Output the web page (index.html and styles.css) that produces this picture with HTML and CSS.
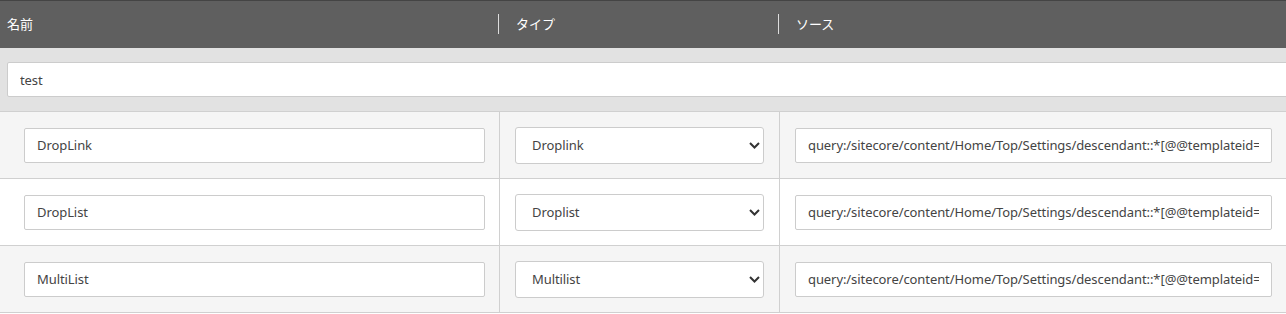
FILE: index.html
```html
<!DOCTYPE html>
<html lang="ja">

<head>
    <meta charset="UTF-8">
    <meta name="viewport" content="width=device-width, initial-scale=1.0">
    <title>Fields</title>
    <link rel="stylesheet" href="styles.css">
</head>

<body>
    <div class="grid">
        <div class="head">
            <div class="hcell">名前</div>
            <div class="hcell sep">タイプ</div>
            <div class="hcell sep">ソース</div>
        </div>

        <div class="group">
            <input class="field group-name" value="test">
        </div>

        <div class="row odd">
            <div class="cell first"><input class="field" value="DropLink"></div>
            <div class="cell">
                <div class="pick">
                    <select class="field">
                        <option>Droplink</option>
                    </select>
                    <svg class="chev" width="11" height="7" viewBox="0 0 11 7"><path d="M1 1l4.5 4.5L10 1" fill="none" stroke="#333" stroke-width="2"/></svg>
                </div>
            </div>
            <div class="cell"><input class="field" value="query:/sitecore/content/Home/Top/Settings/descendant::*[@@templateid='{0A3B2E6F}']"></div>
        </div>

        <div class="row">
            <div class="cell first"><input class="field" value="DropList"></div>
            <div class="cell">
                <div class="pick">
                    <select class="field">
                        <option>Droplist</option>
                    </select>
                    <svg class="chev" width="11" height="7" viewBox="0 0 11 7"><path d="M1 1l4.5 4.5L10 1" fill="none" stroke="#333" stroke-width="2"/></svg>
                </div>
            </div>
            <div class="cell"><input class="field" value="query:/sitecore/content/Home/Top/Settings/descendant::*[@@templateid='{0A3B2E6F}']"></div>
        </div>

        <div class="row odd">
            <div class="cell first"><input class="field" value="MultiList"></div>
            <div class="cell">
                <div class="pick">
                    <select class="field">
                        <option>Multilist</option>
                    </select>
                    <svg class="chev" width="11" height="7" viewBox="0 0 11 7"><path d="M1 1l4.5 4.5L10 1" fill="none" stroke="#333" stroke-width="2"/></svg>
                </div>
            </div>
            <div class="cell"><input class="field" value="query:/sitecore/content/Home/Top/Settings/descendant::*[@@templateid='{0A3B2E6F}']"></div>
        </div>
    </div>
</body>

</html>
```

FILE: styles.css
```css
body {
    font-family: "Noto Sans", "Noto Sans CJK JP", sans-serif;
    font-size: 13px;
    margin: 0;
    padding: 0;
    background-color: #fff;
    color: #333;
    overflow: hidden;
}

.grid {
    width: 1296px;
}

.head {
    display: grid;
    grid-template-columns: 498px 280px 1fr;
    height: 47px;
    background-color: #5f5f5f;
    border-top: 1px solid #444;
    color: #fff;
    align-items: center;
}

.hcell {
    padding-left: 7px;
    margin-top: -2px;
}

.hcell.sep {
    border-left: 1px solid #ddd;
    padding-left: 17px;
    line-height: 20px;
}

.group {
    background-color: #e2e2e2;
    padding: 14px 0 14px 7px;
    border-bottom: 1px solid #d0d0d0;
}

.field {
    display: block;
    box-sizing: border-box;
    width: 100%;
    height: 35px;
    border: 1px solid #ccc;
    border-radius: 2px;
    background: #fff;
    font-family: inherit;
    font-size: 13px;
    letter-spacing: -0.08px;
    color: #444;
    padding: 0 12px;
    outline: none;
}

.group-name {
    width: 100%;
}

.row {
    display: grid;
    grid-template-columns: 500px 280px 1fr;
    height: 66px;
    border-bottom: 1px solid #d0d0d0;
    background-color: #fff;
}

.row.odd {
    background-color: #f5f5f5;
}

.cell {
    display: flex;
    align-items: center;
    padding: 0 15px;
    border-right: 1px solid #d0d0d0;
}

.cell:last-child {
    border-right: none;
    padding-right: 24px;
}

.cell.first {
    padding: 0 14px 0 24px;
}

.pick {
    position: relative;
    width: 100%;
}

.pick select {
    height: 37px;
    -webkit-appearance: none;
    appearance: none;
    padding-left: 16px;
    border-radius: 3px;
}

.chev {
    position: absolute;
    right: 4px;
    top: 15px;
    pointer-events: none;
}
```
